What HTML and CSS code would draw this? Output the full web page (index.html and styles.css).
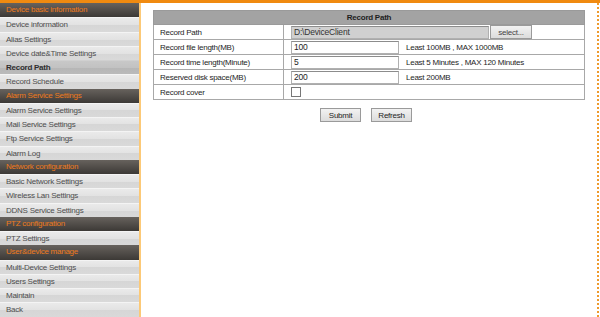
FILE: index.html
```html
<!DOCTYPE html>
<html lang="en">
<head>
    <meta charset="UTF-8">
    <title>Record Path</title>
    <link rel="stylesheet" href="styles.css">
</head>
<body>
    <div class="topbar"></div>
    <div class="page">
        <div class="sidebar">
            <div class="menu-head">Device basic information</div>
            <div class="menu-item">Device information</div>
            <div class="menu-item">Alias Settings</div>
            <div class="menu-item">Device date&amp;Time Settings</div>
            <div class="menu-item active">Record Path</div>
            <div class="menu-item">Record Schedule</div>
            <div class="menu-head">Alarm Service Settings</div>
            <div class="menu-item">Alarm Service Settings</div>
            <div class="menu-item">Mail Service Settings</div>
            <div class="menu-item">Ftp Service Settings</div>
            <div class="menu-item">Alarm Log</div>
            <div class="menu-head">Network configuration</div>
            <div class="menu-item">Basic Network Settings</div>
            <div class="menu-item">Wireless Lan Settings</div>
            <div class="menu-item">DDNS Service Settings</div>
            <div class="menu-head">PTZ configuration</div>
            <div class="menu-item">PTZ Settings</div>
            <div class="menu-head">User&amp;device manage</div>
            <div class="menu-item">Multi-Device Settings</div>
            <div class="menu-item">Users Settings</div>
            <div class="menu-item">Maintain</div>
            <div class="menu-item">Back</div>
        </div>
        <div class="main">
            <table class="settings">
                <tr>
                    <th colspan="2">Record Path</th>
                </tr>
                <tr>
                    <td class="label">Record Path</td>
                    <td>
                        <input type="text" class="path-input" value="D:\DeviceClient" disabled><button class="select-btn">select...</button>
                    </td>
                </tr>
                <tr>
                    <td class="label">Record file length(MB)</td>
                    <td><input type="text" class="num-input" value="100"><span class="hint">Least 100MB , MAX 1000MB</span></td>
                </tr>
                <tr>
                    <td class="label">Record time length(Minute)</td>
                    <td><input type="text" class="num-input" value="5"><span class="hint">Least 5 Minutes , MAX 120 Minutes</span></td>
                </tr>
                <tr>
                    <td class="label">Reserved disk space(MB)</td>
                    <td><input type="text" class="num-input" value="200"><span class="hint">Least 200MB</span></td>
                </tr>
                <tr>
                    <td class="label">Record cover</td>
                    <td><span class="check"></span></td>
                </tr>
            </table>
            <div class="actions">
                <button class="btn">Submit</button>
                <button class="btn">Refresh</button>
            </div>
        </div>
    </div>
</body>
</html>
```

FILE: styles.css
```css
body {
    margin: 0;
    padding: 0;
    font-family: "Liberation Sans", Arial, sans-serif;
    font-size: 8px;
    letter-spacing: -0.25px;
    background-color: #FFFFFF;
    overflow: hidden;
}
.topbar {
    height: 3px;
    background-color: #F08A10;
}
.page {
    display: flex;
    height: 314px;
}
.sidebar {
    width: 139px;
    flex-shrink: 0;
    display: flex;
    flex-direction: column;
}
.menu-head,
.menu-item {
    height: 14.25px;
    line-height: 14px;
    padding-left: 6px;
    box-sizing: border-box;
    white-space: nowrap;
    overflow: hidden;
}
.menu-head {
    background: linear-gradient(#67625d, #3c3936);
    color: #EE7A1C;
}
.menu-item {
    background: linear-gradient(#eaeaea 0, #e2e2e2 50%, #d6d6d6 50%, #d9d9d9 100%);
    border-top: 1px solid #f4f4f4;
    color: #4e4e4e;
    line-height: 13px;
}
.menu-item.active {
    background: linear-gradient(#c8c8c8 0, #c2c2c2 50%, #b6b6b6 50%, #bababa 100%);
    border-top-color: #d0d0d0;
    color: #2e2e2e;
    font-weight: bold;
}
.main {
    flex: 1;
    border-left: 2px solid #FCC977;
    border-right: 2px dotted #EE9A2E;
    margin-right: 1px;
    padding: 7px 12px 0 12px;
}
.settings {
    width: 432px;
    border-collapse: collapse;
    border: 1px solid #9a9a9a;
}
.settings th {
    height: 13px;
    background-color: #a3a3a3;
    color: #1e1e1e;
    font-weight: bold;
    text-align: center;
    border: 1px solid #9a9a9a;
    padding: 0;
}
.settings td {
    height: 14px;
    padding: 0 0 0 7px;
    border: 1px solid #a8a8a8;
    color: #1e1e1e;
    white-space: nowrap;
}
.settings td.label {
    width: 123px;
    padding-left: 6px;
}
.path-input,
.num-input {
    height: 13px;
    box-sizing: border-box;
    border: 1px solid #b0b0b0;
    border-top-color: #8c8c8c;
    font-family: "Liberation Sans", Arial, sans-serif;
    font-size: 8.5px;
    letter-spacing: -0.2px;
    padding: 0 2px;
    margin: 0;
    vertical-align: middle;
    color: #1e1e1e;
}
.path-input {
    width: 198px;
    background-color: #d0d0d0;
    color: #333333;
}
.num-input {
    width: 108px;
    background-color: #FFFFFF;
}
.hint {
    margin-left: 7px;
    vertical-align: middle;
}
.select-btn,
.btn {
    height: 14px;
    padding: 0;
    font-family: "Liberation Sans", Arial, sans-serif;
    font-size: 8px;
    letter-spacing: -0.25px;
    color: #1e1e1e;
    background: linear-gradient(#f2f2f2, #dcdcdc);
    border: 1px solid #9a9a9a;
    vertical-align: middle;
    cursor: pointer;
}
.select-btn {
    width: 42px;
    margin-left: 1px;
    color: #444444;
}
.check {
    display: inline-block;
    width: 8px;
    height: 8px;
    border: 1px solid #777777;
    background-color: #FFFFFF;
    vertical-align: middle;
}
.actions {
    display: flex;
    justify-content: center;
    gap: 10px;
    margin-top: 8px;
    padding-right: 6px;
}
.btn {
    width: 41px;
}
```
